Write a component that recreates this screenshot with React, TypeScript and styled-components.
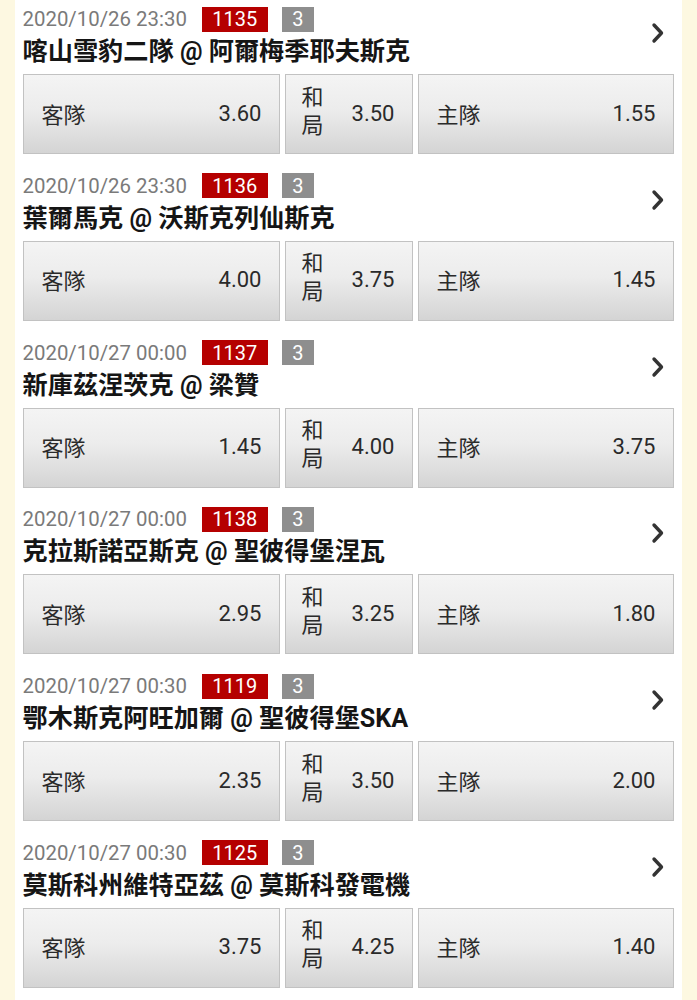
import React from "react";
import styled, { createGlobalStyle } from "styled-components";

const Global = createGlobalStyle`
  html, body { margin: 0; padding: 0; background: #fdf8e1; }
  body { font-family: Roboto, "Noto Sans CJK TC", sans-serif; }
`;

const Page = styled.div`
  width: 697px;
  min-height: 1000px;
  background: #fdf8e1;
  display: flex;
  justify-content: center;
`;

const Column = styled.div`
  width: 667px;
  margin-left: -1px;
  background: #ffffff;
  display: flex;
  flex-direction: column;
`;

const Block = styled.section`
  height: 166.8px;
  box-sizing: border-box;
  padding: 6px 8px 0 8px;
  display: flex;
  flex-direction: column;
`;

const Header = styled.div`
  display: flex;
  align-items: center;
  justify-content: space-between;
`;

const HeaderText = styled.div`
  display: flex;
  flex-direction: column;
`;

const MetaRow = styled.div`
  display: flex;
  align-items: center;
  height: 26px;
`;

const DateText = styled.span`
  font-size: 20.4px;
  color: #7a7a7a;
  line-height: 26px;
  margin-right: 15px;
`;

const Badge = styled.span<{ $tone: "red" | "gray" }>`
  display: inline-flex;
  align-items: center;
  justify-content: center;
  height: 25px;
  padding: 0 10px;
  box-sizing: border-box;
  font-size: 20px;
  color: #ffffff;
  background: ${(p) => (p.$tone === "red" ? "#b50000" : "#8e8e8e")};
  margin-right: 14px;
  min-width: ${(p) => (p.$tone === "red" ? "66px" : "32px")};
`;

const Title = styled.div`
  font-size: 25.2px;
  font-weight: 700;
  color: #151515;
  line-height: 32px;
  margin-top: 4px;
  white-space: nowrap;
`;

const Chevron = styled.svg`
  width: 14px;
  height: 22px;
  margin-right: 9px;
  margin-top: -8px;
  flex-shrink: 0;
`;

const OddsRow = styled.div`
  display: grid;
  grid-template-columns: 257px 128px 256px;
  column-gap: 5px;
  margin-top: 6px;
`;

const OddsButton = styled.div`
  height: 80px;
  box-sizing: border-box;
  border: 1px solid #c2c2c2;
  background: linear-gradient(to bottom, #f4f4f4 0%, #ececec 45%, #d4d4d4 100%);
  display: flex;
  align-items: center;
  justify-content: space-between;
  padding: 0 17px 0 18px;
  font-size: 22px;
  color: #2a2a2a;
`;

const DrawButton = styled(OddsButton)`
  padding: 0 17px 0 16px;
`;

const Label = styled.span`
  font-size: 22px;
  margin-top: -3px;
`;

const StackLabel = styled.span`
  display: flex;
  flex-direction: column;
  font-size: 22px;
  line-height: 28px;
  margin-top: -5px;
`;

const Price = styled.span`
  font-size: 22px;
  font-family: Roboto, sans-serif;
  margin-top: -2px;
`;

type Match = {
  date: string;
  code: string;
  count: string;
  title: string;
  away: string;
  draw: string;
  home: string;
};

const matches: Match[] = [
  { date: "2020/10/26 23:30", code: "1135", count: "3", title: "喀山雪豹二隊 @ 阿爾梅季耶夫斯克", away: "3.60", draw: "3.50", home: "1.55" },
  { date: "2020/10/26 23:30", code: "1136", count: "3", title: "葉爾馬克 @ 沃斯克列仙斯克", away: "4.00", draw: "3.75", home: "1.45" },
  { date: "2020/10/27 00:00", code: "1137", count: "3", title: "新庫茲涅茨克 @ 梁贊", away: "1.45", draw: "4.00", home: "3.75" },
  { date: "2020/10/27 00:00", code: "1138", count: "3", title: "克拉斯諾亞斯克 @ 聖彼得堡涅瓦", away: "2.95", draw: "3.25", home: "1.80" },
  { date: "2020/10/27 00:30", code: "1119", count: "3", title: "鄂木斯克阿旺加爾 @ 聖彼得堡SKA", away: "2.35", draw: "3.50", home: "2.00" },
  { date: "2020/10/27 00:30", code: "1125", count: "3", title: "莫斯科州維特亞茲 @ 莫斯科發電機", away: "3.75", draw: "4.25", home: "1.40" },
];

function MatchBlock({ m }: { m: Match }) {
  return (
    <Block>
      <Header>
        <HeaderText>
          <MetaRow>
            <DateText>{m.date}</DateText>
            <Badge $tone="red">{m.code}</Badge>
            <Badge $tone="gray">{m.count}</Badge>
          </MetaRow>
          <Title>{m.title}</Title>
        </HeaderText>
        <Chevron viewBox="0 0 14 22">
          <path d="M3 3 L10.5 11 L3 19" fill="none" stroke="#333" strokeWidth="3.4" strokeLinecap="round" strokeLinejoin="round" />
        </Chevron>
      </Header>
      <OddsRow>
        <OddsButton>
          <Label>客隊</Label>
          <Price>{m.away}</Price>
        </OddsButton>
        <DrawButton>
          <StackLabel>
            <span>和</span>
            <span>局</span>
          </StackLabel>
          <Price>{m.draw}</Price>
        </DrawButton>
        <OddsButton>
          <Label>主隊</Label>
          <Price>{m.home}</Price>
        </OddsButton>
      </OddsRow>
    </Block>
  );
}

export default function App() {
  return (
    <>
      <Global />
      <Page>
        <Column>
          {matches.map((m) => (
            <MatchBlock key={m.code} m={m} />
          ))}
        </Column>
      </Page>
    </>
  );
}
